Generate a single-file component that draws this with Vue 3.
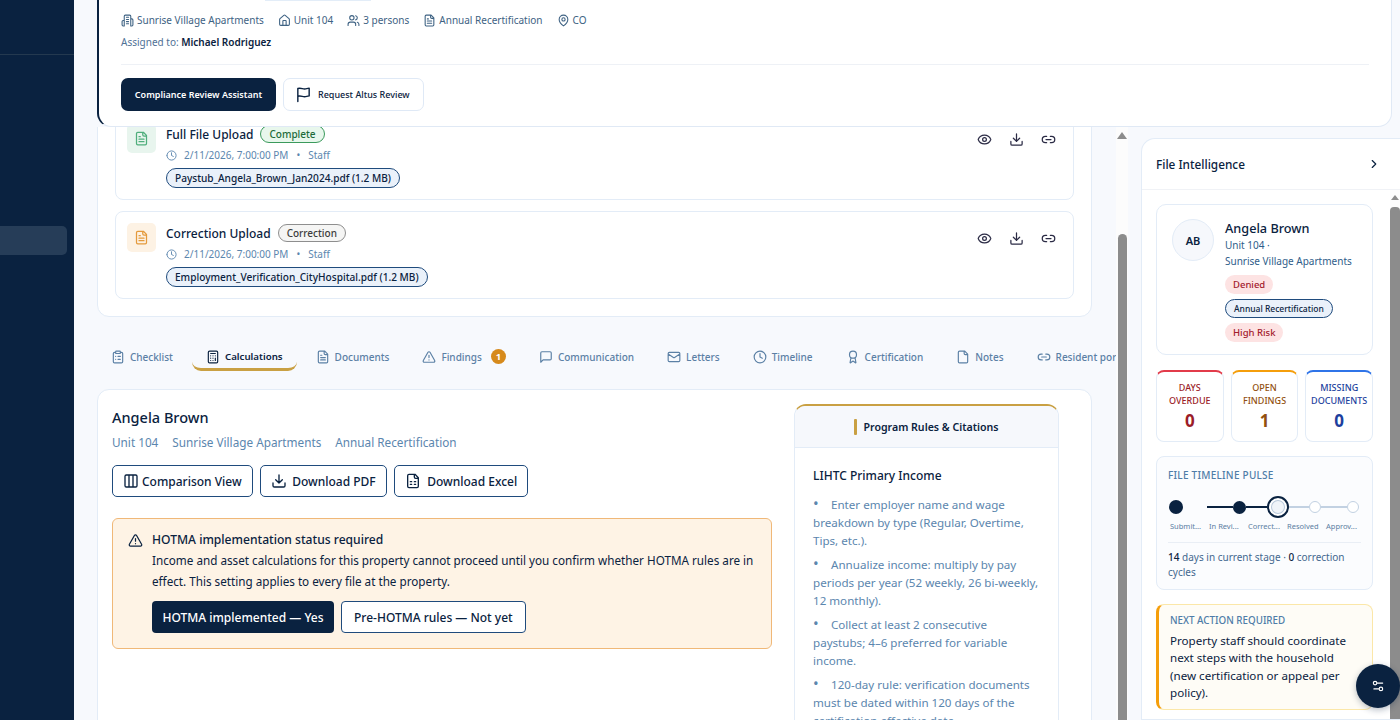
<template>
  <div class="page">
    <aside class="sidebar">
      <div class="side-top"></div>
      <div class="side-active"></div>
    </aside>

    <main class="main">
      <header class="file-head">
        <div class="head-pill"></div>
        <div class="meta-row">
          <span v-for="m in headMeta" :key="m.text" class="meta-item">
            <Icon :name="m.icon" :size="13" />
            {{ m.text }}
          </span>
        </div>
        <div class="assigned">Assigned to: <b>Michael Rodriguez</b></div>
        <div class="head-actions">
          <button class="btn-assist">Compliance Review Assistant</button>
          <button class="btn-altus">
            <Icon name="flag" :size="17" />
            Request Altus Review
          </button>
        </div>
      </header>

      <div class="body">
        <div class="content-wrap">
          <div class="content">
            <section class="uploads">
              <div v-for="u in uploads" :key="u.title" class="upload">
                <div class="upload-icon" :class="u.tone">
                  <Icon name="fileText" :size="15" />
                </div>
                <div class="upload-info">
                  <div class="upload-title">
                    {{ u.title }}
                    <span class="status" :class="u.tone">{{ u.status }}</span>
                  </div>
                  <div class="upload-meta">
                    <Icon name="clock" :size="11" />
                    <span>2/11/2026, 7:00:00 PM</span>
                    <span class="dot">•</span>
                    <span>Staff</span>
                  </div>
                  <span class="file-chip">{{ u.file }}</span>
                </div>
                <div class="upload-actions">
                  <Icon name="eye" :size="15" />
                  <Icon name="download" :size="15" />
                  <Icon name="link" :size="15" />
                </div>
              </div>
            </section>

            <nav class="tabs">
              <div
                v-for="t in tabs"
                :key="t.label"
                class="tab"
                :class="{ active: t.label === 'Calculations' }"
              >
                <Icon :name="t.icon" :size="14" />
                <span>{{ t.label }}</span>
                <span v-if="t.count" class="tab-count">{{ t.count }}</span>
              </div>
            </nav>

            <section class="calc">
              <div class="calc-left">
                <h2 class="calc-name">Angela Brown</h2>
                <div class="calc-sub">
                  <span>Unit 104</span>
                  <span>Sunrise Village Apartments</span>
                  <span>Annual Recertification</span>
                </div>
                <div class="calc-btns">
                  <button class="btn-outline">
                    <Icon name="columns" :size="16" />
                    Comparison View
                  </button>
                  <button class="btn-outline">
                    <Icon name="download" :size="16" />
                    Download PDF
                  </button>
                  <button class="btn-outline">
                    <Icon name="sheet" :size="16" />
                    Download Excel
                  </button>
                </div>
                <div class="alert">
                  <Icon name="alert" :size="15" class="alert-icon" />
                  <div>
                    <div class="alert-title">HOTMA implementation status required</div>
                    <p class="alert-text">
                      Income and asset calculations for this property cannot proceed until you
                      confirm whether HOTMA rules are in effect. This setting applies to every
                      file at the property.
                    </p>
                    <div class="alert-btns">
                      <button class="btn-solid">HOTMA implemented — Yes</button>
                      <button class="btn-plain">Pre-HOTMA rules — Not yet</button>
                    </div>
                  </div>
                </div>
              </div>

              <aside class="rules">
                <div class="rules-head"><span class="gold-bar"></span>Program Rules &amp; Citations</div>
                <div class="rules-body">
                  <h3>LIHTC Primary Income</h3>
                  <p v-for="r in rules" :key="r" class="rule"><span class="bullet">•</span>{{ r }}</p>
                </div>
              </aside>
            </section>
          </div>
          <div class="scrollbar">
            <span class="arrow"></span>
            <span class="thumb main-thumb"></span>
          </div>
        </div>

        <aside class="intel">
          <div class="intel-head">
            File Intelligence
            <Icon name="chevron" :size="14" />
          </div>
          <div class="intel-wrap">
            <div class="intel-body">
              <div class="profile">
                <div class="avatar">AB</div>
                <div>
                  <div class="profile-name">Angela Brown</div>
                  <div class="profile-sub">Unit 104 ·<br />Sunrise Village Apartments</div>
                  <div class="profile-tags">
                    <span class="tag red">Denied</span>
                    <span class="tag blue">Annual Recertification</span>
                    <span class="tag red">High Risk</span>
                  </div>
                </div>
              </div>

              <div class="stats">
                <div v-for="s in stats" :key="s.tone" class="stat" :class="s.tone">
                  <div class="stat-label">{{ s.a }}<br />{{ s.b }}</div>
                  <div class="stat-value">{{ s.value }}</div>
                </div>
              </div>

              <div class="pulse">
                <div class="small-head">FILE TIMELINE PULSE</div>
                <div class="track">
                  <span class="node done first"></span>
                  <span class="seg blank"></span>
                  <span class="seg dark s1"></span>
                  <span class="node done"></span>
                  <span class="seg dark s2"></span>
                  <span class="node current"></span>
                  <span class="seg s3"></span>
                  <span class="node"></span>
                  <span class="seg s4"></span>
                  <span class="node"></span>
                </div>
                <div class="track-labels">
                  <span v-for="l in stages" :key="l">{{ l }}</span>
                </div>
                <div class="pulse-foot"><b>14</b> days in current stage · <b>0</b> correction cycles</div>
              </div>

              <div class="next">
                <div class="small-head">NEXT ACTION REQUIRED</div>
                <p>Property staff should coordinate next steps with the household (new certification or appeal per policy).</p>
              </div>
            </div>
            <div class="scrollbar intel-bar">
              <span class="arrow"></span>
              <span class="thumb"></span>
            </div>
          </div>
        </aside>
      </div>

      <button class="fab"><Icon name="sliders" :size="14" /></button>
    </main>
  </div>
</template>

<script setup>
import { h } from "vue";

const file = "M15 2H6a2 2 0 0 0-2 2v16a2 2 0 0 0 2 2h12a2 2 0 0 0 2-2V7Z M14 2v4a2 2 0 0 0 2 2h4";

const paths = {
  building:
    "M6 22V4a2 2 0 0 1 2-2h8a2 2 0 0 1 2 2v18 M6 12H4a2 2 0 0 0-2 2v6a2 2 0 0 0 2 2h2 M18 9h2a2 2 0 0 1 2 2v9a2 2 0 0 1-2 2h-2 M10 6h4 M10 10h4 M10 14h4 M10 18h4",
  home: "M15 21v-8a1 1 0 0 0-1-1h-4a1 1 0 0 0-1 1v8 M3 10a2 2 0 0 1 .709-1.528l7-5.999a2 2 0 0 1 2.582 0l7 5.999A2 2 0 0 1 21 10v9a2 2 0 0 1-2 2H5a2 2 0 0 1-2-2z",
  users:
    "M16 21v-2a4 4 0 0 0-4-4H6a4 4 0 0 0-4 4v2 M5 7a4 4 0 1 0 8 0a4 4 0 1 0-8 0 M22 21v-2a4 4 0 0 0-3-3.87 M16 3.13a4 4 0 0 1 0 7.75",
  fileText: file + " M10 9H8 M16 13H8 M16 17H8",
  pin: "M20 10c0 6-8 12-8 12s-8-6-8-12a8 8 0 0 1 16 0Z M9 10a3 3 0 1 0 6 0a3 3 0 1 0-6 0",
  flag: "M4 22V3.5c5-1.5 7 1.5 11 .5l5-1v11l-5 1c-4 1-6-2-11-.5",
  clock: "M2 12a10 10 0 1 0 20 0a10 10 0 1 0-20 0 M12 6v6l4 2",
  eye: "M2.062 12.348a1 1 0 0 1 0-.696 10.75 10.75 0 0 1 19.876 0 1 1 0 0 1 0 .696 10.75 10.75 0 0 1-19.876 0 M9 12a3 3 0 1 0 6 0a3 3 0 1 0-6 0",
  download: "M21 15v4a2 2 0 0 1-2 2H5a2 2 0 0 1-2-2v-4 M7 10l5 5 5-5 M12 15V3",
  link: "M9 17H7A5 5 0 0 1 7 7h2 M15 7h2a5 5 0 1 1 0 10h-2 M8 12h8",
  checklist:
    "M9 2h6a1 1 0 0 1 1 1v2a1 1 0 0 1-1 1H9a1 1 0 0 1-1-1V3a1 1 0 0 1 1-1z M16 4h2a2 2 0 0 1 2 2v14a2 2 0 0 1-2 2H6a2 2 0 0 1-2-2V6a2 2 0 0 1 2-2h2 M12 11h4 M12 16h4 M8 11h.01 M8 16h.01",
  calculator:
    "M6 2h12a2 2 0 0 1 2 2v16a2 2 0 0 1-2 2H6a2 2 0 0 1-2-2V4a2 2 0 0 1 2-2z M8 6h8 M16 14v4 M16 10h.01 M12 10h.01 M8 10h.01 M12 14h.01 M8 14h.01 M12 18h.01 M8 18h.01",
  alert: "m21.73 18-8-14a2 2 0 0 0-3.48 0l-8 14A2 2 0 0 0 4 21h16a2 2 0 0 0 1.73-3 M12 9v4 M12 17h.01",
  message: "M21 15a2 2 0 0 1-2 2H7l-4 4V5a2 2 0 0 1 2-2h14a2 2 0 0 1 2 2z",
  mail: "M4 4h16a2 2 0 0 1 2 2v12a2 2 0 0 1-2 2H4a2 2 0 0 1-2-2V6a2 2 0 0 1 2-2z M22 7l-8.97 5.7a1.94 1.94 0 0 1-2.06 0L2 7",
  award:
    "m15.477 12.89 1.515 8.526a.5.5 0 0 1-.81.47l-3.58-2.687a1 1 0 0 0-1.197 0l-3.586 2.686a.5.5 0 0 1-.81-.469l1.514-8.526 M6 8a6 6 0 1 0 12 0a6 6 0 1 0-12 0",
  file,
  columns: "M5 3h14a2 2 0 0 1 2 2v14a2 2 0 0 1-2 2H5a2 2 0 0 1-2-2V5a2 2 0 0 1 2-2z M9 3v18 M15 3v18",
  sheet: file + " M8 13h2 M14 13h2 M8 17h2 M14 17h2",
  chevron: "m9 18 6-6-6-6",
  sliders: "M20 7h-9 M14 17H5 M14 17a3 3 0 1 0 6 0a3 3 0 1 0-6 0 M4 7a3 3 0 1 0 6 0a3 3 0 1 0-6 0",
};

const Icon = (props) =>
  h(
    "svg",
    {
      width: props.size,
      height: props.size,
      viewBox: "0 0 24 24",
      fill: "none",
      stroke: "currentColor",
      "stroke-width": 2,
      "stroke-linecap": "round",
      "stroke-linejoin": "round",
    },
    [h("path", { d: paths[props.name] })]
  );
Icon.props = ["name", "size"];

const headMeta = [
  { icon: "building", text: "Sunrise Village Apartments" },
  { icon: "home", text: "Unit 104" },
  { icon: "users", text: "3 persons" },
  { icon: "fileText", text: "Annual Recertification" },
  { icon: "pin", text: "CO" },
];

const uploads = [
  { title: "Full File Upload", status: "Complete", tone: "green", file: "Paystub_Angela_Brown_Jan2024.pdf (1.2 MB)" },
  { title: "Correction Upload", status: "Correction", tone: "amber", file: "Employment_Verification_CityHospital.pdf (1.2 MB)" },
];

const tabs = [
  { icon: "checklist", label: "Checklist" },
  { icon: "calculator", label: "Calculations" },
  { icon: "fileText", label: "Documents" },
  { icon: "alert", label: "Findings", count: 1 },
  { icon: "message", label: "Communication" },
  { icon: "mail", label: "Letters" },
  { icon: "clock", label: "Timeline" },
  { icon: "award", label: "Certification" },
  { icon: "file", label: "Notes" },
  { icon: "link", label: "Resident portal" },
];

const rules = [
  "Enter employer name and wage breakdown by type (Regular, Overtime, Tips, etc.).",
  "Annualize income: multiply by pay periods per year (52 weekly, 26 bi-weekly, 12 monthly).",
  "Collect at least 2 consecutive paystubs; 4–6 preferred for variable income.",
  "120-day rule: verification documents must be dated within 120 days of the certification effective date.",
];

const stats = [
  { tone: "red", a: "DAYS", b: "OVERDUE", value: 0 },
  { tone: "orange", a: "OPEN", b: "FINDINGS", value: 1 },
  { tone: "blue", a: "MISSING", b: "DOCUMENTS", value: 0 },
];

const stages = ["Submit...", "In Revi...", "Correct...", "Resolved", "Approv..."];
</script>

<style>
html,
body {
  margin: 0;
  height: 100%;
  overflow: hidden;
}
</style>

<style scoped>
.page {
  display: flex;
  width: 1400px;
  height: 720px;
  overflow: hidden;
  background: #f7f9fd;
  color: #0a2240;
  font-family: "Noto Sans", "Open Sans", sans-serif;
}

button {
  font-family: inherit;
  cursor: pointer;
}

.sidebar {
  flex: 0 0 74px;
  background: #0a2240;
}

.side-top {
  height: 54px;
  border-bottom: 1px solid #24394f;
}

.side-active {
  margin-top: 171px;
  width: 67px;
  height: 29px;
  background: #263d58;
  border-radius: 0 5px 5px 0;
}

.main {
  flex: 1;
  min-width: 0;
  padding-left: 23px;
  position: relative;
  display: flex;
  flex-direction: column;
}

.file-head {
  position: relative;
  z-index: 2;
  flex: 0 0 127px;
  box-sizing: border-box;
  width: 1295px;
  background: #fff;
  border: 1px solid #e0e9f5;
  border-top: 0;
  border-left: 2px solid #0a2240;
  border-radius: 0 0 14px 14px;
  padding-left: 22px;
  padding-right: 22px;
}

.head-pill {
  margin-left: 144px;
  width: 106px;
  height: 1px;
  background: #e3edf8;
}

.meta-row {
  display: flex;
  gap: 14px;
  margin-top: 11px;
  height: 16px;
  align-items: center;
  font-size: 10px;
  color: #3e6283;
}

.meta-item {
  display: inline-flex;
  align-items: center;
  gap: 3px;
}

.assigned {
  margin-top: 6px;
  font-size: 10px;
  color: #4f7196;
  height: 16px;
  line-height: 16px;
  padding-bottom: 14px;
  border-bottom: 1px solid #eef1f6;
}

.assigned b {
  font-weight: 600;
  color: #0a2240;
}

.head-actions {
  display: flex;
  gap: 7px;
  margin-top: 13px;
}

.btn-assist {
  height: 33px;
  width: 155px;
  padding: 0;
  background: #0a2240;
  color: #fff;
  border: 0;
  border-radius: 7px;
  font-size: 9px;
  font-weight: 600;
}

.btn-altus {
  display: flex;
  align-items: center;
  gap: 6px;
  height: 33px;
  width: 141px;
  padding: 0 0 0 11px;
  background: #fff;
  color: #0a2240;
  border: 1px solid #dfe9f6;
  border-radius: 7px;
  font-size: 9px;
  font-weight: 500;
}

.body {
  flex: 1;
  display: flex;
  min-height: 0;
}

.content-wrap {
  flex: 0 0 1031px;
  display: flex;
  gap: 24px;
  overflow: hidden;
}

.content {
  flex: 0 0 995px;
  min-width: 0;
  margin-top: -33px;
}

.uploads {
  box-sizing: border-box;
  height: 223px;
  padding: 17px;
  background: #fff;
  border: 1px solid #e3ecf7;
  border-radius: 12px;
  display: flex;
  flex-direction: column;
  gap: 11px;
}

.upload {
  flex: 0 0 88px;
  box-sizing: border-box;
  display: flex;
  gap: 10px;
  padding: 11px;
  border: 1px solid #e3ecf7;
  border-radius: 8px;
}

.upload-icon {
  flex: 0 0 29px;
  height: 29px;
  display: flex;
  align-items: center;
  justify-content: center;
  border-radius: 5px;
}

.upload-icon.green {
  background: #e8f5ee;
  color: #4fae7c;
}

.upload-icon.amber {
  background: #fdf2e4;
  color: #e49a3c;
}

.upload-info {
  flex: 1;
}

.upload-title {
  display: flex;
  align-items: center;
  gap: 7px;
  height: 20px;
  font-size: 12px;
  font-weight: 500;
}

.status {
  display: inline-block;
  box-sizing: border-box;
  height: 18px;
  line-height: 16px;
  padding: 0 8px;
  border-radius: 9px;
  font-size: 10px;
  font-weight: 500;
}

.status.green {
  background: #e8f7ec;
  border: 1px solid #3b9a5c;
  color: #1d6b3a;
}

.status.amber {
  background: #f5f5f4;
  border: 1px solid #8e8e8e;
  color: #3d3d3d;
}

.upload-meta {
  display: flex;
  align-items: center;
  margin-top: 3px;
  height: 16px;
  font-size: 10px;
  color: #5b86ae;
}

.upload-meta svg {
  margin-right: 7px;
}

.dot {
  margin: 0 8px;
}

.file-chip {
  display: inline-block;
  box-sizing: border-box;
  margin-top: 5px;
  height: 20px;
  line-height: 18px;
  padding: 0 8px;
  font-size: 10.1px;
  font-weight: 500;
  background: #eaf1fa;
  border: 1px solid #1f4b7d;
  border-radius: 10px;
}

.upload-actions {
  display: flex;
  gap: 17px;
  padding: 8px 6px 0 0;
  color: #2b2b45;
}

.tabs {
  display: flex;
  gap: 5px;
  margin: 29px -25px 18px 0;
  height: 25px;
  white-space: nowrap;
  overflow: hidden;
}

.tab {
  box-sizing: border-box;
  display: flex;
  align-items: center;
  gap: 5px;
  padding: 0 14px 1px;
  font-size: 10px;
  font-weight: 500;
  color: #5b80a5;
  border-bottom: 3px solid transparent;
  border-radius: 0 0 9px 9px;
}

.tab.active {
  color: #0a2240;
  font-size: 9.7px;
  font-weight: 600;
  border-bottom-color: #c9a043;
}

.tab-count {
  width: 15px;
  height: 15px;
  margin-left: 4px;
  border-radius: 50%;
  background: #d68a1c;
  color: #fff;
  font-size: 9.5px;
  font-weight: 700;
  text-align: center;
  line-height: 15px;
}

.calc {
  display: flex;
  gap: 22px;
  height: 400px;
  padding: 14px 33px 0 14px;
  background: #fff;
  border: 1px solid #e3ecf7;
  border-radius: 12px;
}

.calc-left {
  flex: 0 0 660px;
}

.calc-name {
  margin: 3px 0 0;
  font-size: 14.5px;
  font-weight: 500;
  line-height: 20px;
}

.calc-sub {
  display: flex;
  gap: 14px;
  margin-top: 6px;
  font-size: 11.75px;
  line-height: 18px;
  color: #5b86ae;
}

.calc-btns {
  display: flex;
  gap: 7px;
  margin-top: 14px;
}

.btn-outline {
  display: flex;
  align-items: center;
  gap: 5.5px;
  height: 32px;
  padding: 0 10px;
  background: #fff;
  color: #0a2240;
  border: 1px solid #1f4b7d;
  border-radius: 5px;
  font-size: 12px;
  font-weight: 500;
}

.btn-outline:first-child {
  gap: 3px;
}

.btn-outline:last-child {
  gap: 6.5px;
}

.alert {
  display: flex;
  gap: 9px;
  box-sizing: border-box;
  height: 131px;
  margin-top: 21px;
  padding: 13px 15px;
  background: #fef3e5;
  border: 1px solid #f0b878;
  border-radius: 6px;
}

.alert-icon {
  flex: none;
  margin-top: 1px;
}

.alert-title {
  font-size: 12.1px;
  font-weight: 500;
  line-height: 16px;
}

.alert-text {
  margin: 2px 0 0;
  font-size: 11.7px;
  line-height: 21px;
}

.alert-btns {
  display: flex;
  gap: 7px;
  margin-top: 9px;
}

.btn-solid,
.btn-plain {
  height: 32px;
  border-radius: 4px;
  font-size: 12px;
  font-weight: 500;
}

.btn-solid {
  padding: 0 10.5px;
  background: #0a2240;
  color: #fff;
  border: 0;
}

.btn-plain {
  padding: 0 12px;
  background: #fff;
  color: #0a2240;
  border: 1px solid #1f4b7d;
}

.rules {
  flex: 0 0 265px;
  box-sizing: border-box;
  height: 400px;
  border: 1px solid #e3ecf7;
  border-top: 2px solid #c9a043;
  border-radius: 12px 12px 0 0;
}

.rules-head {
  display: flex;
  align-items: center;
  justify-content: center;
  height: 41px;
  gap: 6px;
  background: #f6f8fc;
  border-bottom: 1px solid #e3ecf7;
  border-radius: 10px 10px 0 0;
  font-size: 10.6px;
  font-weight: 600;
}

.gold-bar {
  width: 3px;
  height: 16px;
  background: #c9a043;
  border-radius: 1px;
}

.rules-body {
  padding: 18px 18px 0;
}

.rules-body h3 {
  margin: 0 0 10px;
  font-size: 12px;
  font-weight: 500;
  line-height: 20px;
}

.rule {
  margin: 0 0 6px;
  font-size: 11.6px;
  line-height: 18px;
  color: #5b86ae;
}

.bullet {
  display: inline-block;
  width: 18px;
  font-size: 15px;
  line-height: 0;
}

.scrollbar {
  display: flex;
  flex-direction: column;
  align-items: center;
  flex: 0 0 12px;
  background: #fcfcfc;
}

.arrow {
  width: 0;
  height: 0;
  margin-top: 5px;
  border: 5px solid transparent;
  border-top: 0;
  border-bottom: 7px solid #8c8c8c;
}

.thumb {
  width: 9px;
  flex: 1;
  margin-top: 7px;
  background: #8c8c8c;
  border-radius: 5px 5px 0 0;
}

.main-thumb {
  margin-top: 95px;
}

.intel {
  flex: none;
  width: 260px;
  box-sizing: border-box;
  margin: 11px 0 0 13px;
  background: #fff;
  border: 1px solid #e3ecf7;
  border-right: 0;
  border-radius: 14px 0 0 0;
  display: flex;
  flex-direction: column;
}

.intel-head {
  flex: 0 0 50px;
  display: flex;
  align-items: center;
  justify-content: space-between;
  padding: 0 20px 0 14px;
  font-size: 11.8px;
  font-weight: 500;
  border-bottom: 1px solid #f0f2f6;
}

.intel-wrap {
  flex: 1;
  display: flex;
  min-height: 0;
  overflow: hidden;
}

.intel-body {
  flex: 0 0 231px;
  min-width: 0;
  box-sizing: border-box;
  padding: 14px 0 0 14px;
}

.intel-bar {
  flex: 0 0 10px;
  margin-left: 17px;
}

.intel-bar .arrow {
  margin-top: 5px;
  border-left-width: 4px;
  border-right-width: 4px;
  border-bottom-width: 5px;
}

.intel-bar .thumb {
  width: 10px;
  margin-top: 7px;
  border-radius: 4px 4px 0 0;
}

.profile {
  box-sizing: border-box;
  height: 151px;
  display: flex;
  gap: 11px;
  padding: 14px 15px;
  border: 1px solid #e3ecf7;
  border-radius: 10px;
}

.avatar {
  flex: 0 0 42px;
  box-sizing: border-box;
  height: 42px;
  display: flex;
  align-items: center;
  justify-content: center;
  background: #f6f8fc;
  border: 1px solid #e3ecf7;
  border-radius: 50%;
  font-size: 11px;
  font-weight: 600;
}

.profile-name {
  font-size: 12.7px;
  font-weight: 500;
  line-height: 18px;
}

.profile-sub {
  font-size: 10px;
  line-height: 16px;
  color: #2f5d8a;
}

.profile-tags {
  display: flex;
  flex-direction: column;
  align-items: flex-start;
  gap: 5px;
  margin-top: 6px;
}

.tag {
  box-sizing: border-box;
  height: 19px;
  line-height: 19px;
  padding: 0 8px;
  border-radius: 10px;
  font-size: 9.5px;
  font-weight: 500;
}

.tag.red {
  background: #fde3e3;
  color: #a3202c;
}

.tag.blue {
  line-height: 17px;
  font-size: 8.5px;
  background: #eaf1fa;
  color: #0a2240;
  border: 1px solid #1f4b7d;
}

.stats {
  display: flex;
  gap: 7px;
  margin-top: 15px;
}

.stat {
  flex: 1 1 0;
  min-width: 0;
  box-sizing: border-box;
  height: 72px;
  padding-top: 9px;
  border: 1px solid #e3ecf7;
  border-top-width: 2px;
  border-radius: 8px;
  text-align: center;
  white-space: nowrap;
}

.stat-label {
  font-size: 9px;
  font-weight: 500;
  line-height: 13px;
}

.stat-value {
  margin-top: 3px;
  font-size: 17px;
  font-weight: 700;
  line-height: 22px;
}

.stat.red {
  border-top-color: #e23b4a;
  color: #9b1c28;
}

.stat.orange {
  border-top-color: #f59e0b;
  color: #92500f;
}

.stat.blue {
  border-top-color: #2f74e8;
  color: #1d3f9e;
}

.pulse {
  box-sizing: border-box;
  height: 134px;
  margin-top: 14px;
  padding: 11px 11px 0;
  background: #fbfcfe;
  border: 1px solid #e3ecf7;
  border-radius: 8px;
}

.small-head {
  font-size: 10px;
  font-weight: 500;
  line-height: 14px;
  letter-spacing: 0.25px;
  color: #4f7ca8;
}

.track {
  display: flex;
  align-items: center;
  height: 22px;
  margin-top: 14px;
}

.node {
  flex: none;
  box-sizing: border-box;
  width: 12px;
  height: 12px;
  background: #fff;
  border: 1px solid #c2d1e2;
  border-radius: 50%;
}

.node.done {
  width: 13px;
  height: 13px;
  background: #0a2240;
  border: 0;
}

.node.first {
  width: 14px;
  height: 14px;
  margin-left: 1px;
}

.node.current {
  width: 22px;
  height: 22px;
  background: #f0f4f9;
  border: 2px solid #0a2240;
  box-shadow: inset 0 0 0 2px #fff, inset 0 0 0 3px #b9c9db;
}

.seg {
  height: 2px;
  background: #c2d1e2;
}

.seg.dark {
  background: #0a2240;
}

.seg.blank {
  width: 24px;
  background: transparent;
}

.s1 {
  width: 26px;
}

.s2 {
  width: 21px;
}

.s3 {
  width: 20px;
}

.s4 {
  width: 26px;
}

.track-labels {
  display: flex;
  margin-top: 2px;
  padding-left: 2px;
  font-size: 7.5px;
  line-height: 12px;
  color: #5b7ea3;
}

.track-labels span {
  flex: 0 0 39px;
  white-space: nowrap;
}

.pulse-foot {
  margin-top: 10px;
  padding-top: 7px;
  border-top: 1px solid #e9eef5;
  font-size: 10px;
  line-height: 15px;
  color: #44688f;
}

.pulse-foot b {
  font-weight: 500;
  color: #0a2240;
}

.next {
  box-sizing: border-box;
  height: 106px;
  margin-top: 14px;
  padding: 9px 14px 9px 11px;
  background: #fefcf6;
  border: 1px solid #fbe7a8;
  border-left: 3px solid #f59e0b;
  border-radius: 8px;
}

.next .small-head {
  font-size: 9.8px;
  letter-spacing: 0;
}

.next p {
  margin: 4px 0 0;
  font-size: 11.6px;
  line-height: 17.4px;
  color: #0a2240;
}

.fab {
  position: absolute;
  top: 664px;
  left: 1282px;
  z-index: 5;
  width: 44px;
  height: 44px;
  display: flex;
  align-items: center;
  justify-content: center;
  padding: 0;
  background: #0a2240;
  color: #fff;
  border: 0;
  border-radius: 50%;
  box-shadow: 0 2px 6px rgba(10, 34, 64, 0.3);
}
</style>
